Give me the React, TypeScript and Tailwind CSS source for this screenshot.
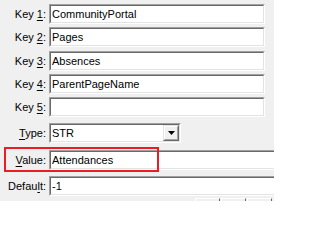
import React from "react";

type Row = {
  pre: string;
  key: string;
  post: string;
  value: string;
};

const keyRows: Row[] = [
  { pre: "Key ", key: "1", post: ":", value: "CommunityPortal" },
  { pre: "Key ", key: "2", post: ":", value: "Pages" },
  { pre: "Key ", key: "3", post: ":", value: "Absences" },
  { pre: "Key ", key: "4", post: ":", value: "ParentPageName" },
  { pre: "Key ", key: "5", post: ":", value: "" },
];

const Label = ({ pre, k, post }: { pre: string; k: string; post: string }) => (
  <span className="w-[46px] shrink-0 text-right whitespace-pre">
    {pre}
    <span className="underline underline-offset-[2px]">{k}</span>
    {post}
  </span>
);

// classic sunken edit box
const Edit = ({ value, className }: { value: string; className: string }) => (
  <div
    className={`ml-[3px] h-[20px] shrink-0 border border-t-[#a0a0a0] border-l-[#a0a0a0] border-b-white border-r-white ${className}`}
  >
    <div className="flex h-full items-center border border-t-[#696969] border-l-[#696969] border-b-[#e3e3e3] border-r-[#e3e3e3] bg-white pl-[1px] leading-none">
      {value}
    </div>
  </div>
);

const App = () => {
  return (
    <div
      className="h-[201px] w-[274px] overflow-hidden bg-[#f0f0f0] pt-[4px] text-[11px] text-black"
      style={{ fontFamily: '"Liberation Sans", Arial, sans-serif' }}
    >
      <div className="flex flex-col">
        {keyRows.map((r, i) => (
          <div
            key={r.key}
            className={`flex h-[20px] items-center ${i === 0 ? "" : i === 2 ? "mt-[4px]" : "mt-[3px]"}`}
          >
            <Label pre={r.pre} k={r.key} post={r.post} />
            <Edit value={r.value} className="w-[216px]" />
          </div>
        ))}

        <div className="mt-[6px] flex h-[20px] items-center">
          <Label pre="" k="T" post="ype:" />
          <div className="ml-[3px] h-[20px] w-[132px] shrink-0 border border-t-[#a0a0a0] border-l-[#a0a0a0] border-b-white border-r-white">
            <div className="flex h-full items-center border border-t-[#696969] border-l-[#696969] border-b-[#e3e3e3] border-r-[#e3e3e3] bg-white pl-[1px]">
              <span className="flex-1 leading-none">STR</span>
              <div className="h-[16px] w-[16px] border border-t-[#e3e3e3] border-l-[#e3e3e3] border-b-[#696969] border-r-[#696969]">
                <div className="flex h-full items-center justify-center border border-t-white border-l-white border-b-[#a0a0a0] border-r-[#a0a0a0] bg-[#f0f0f0]">
                  <svg width="7" height="4" viewBox="0 0 7 4">
                    <path d="M0 0h7L3.5 4z" fill="#000" />
                  </svg>
                </div>
              </div>
            </div>
          </div>
        </div>

        <div className="relative mt-[7px] flex h-[20px] items-center">
          <Label pre="" k="V" post="alue:" />
          <Edit value="Attendances" className="w-[228px]" />
          <span className="pointer-events-none absolute left-[4px] top-[-3px] h-[25px] w-[155px] border-2 border-[#ec1c24]" />
        </div>

        <div className="mt-[6px] flex h-[20px] items-center">
          <Label pre="Defau" k="l" post="t:" />
          <Edit value="-1" className="w-[228px]" />
        </div>

        <div className="mt-[2px] flex gap-[1px] pl-[195px]">
          {[0, 1, 2].map((b) => (
            <div
              key={b}
              className="h-[22px] w-[25px] shrink-0 border border-t-white border-l-white border-b-[#696969] border-r-[#696969] bg-[#f0f0f0]"
            />
          ))}
        </div>
      </div>
    </div>
  );
};

export default App;
